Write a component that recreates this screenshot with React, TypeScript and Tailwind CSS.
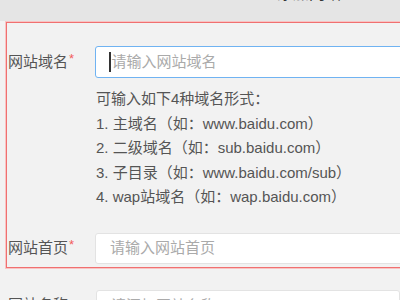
import React from "react";

const font = { fontFamily: '"Liberation Sans", "Noto Sans CJK SC", sans-serif' };

function Label({ text, req = true }: { text: string; req?: boolean }) {
  return (
    <div className="w-[88px] shrink-0 pl-[1px] text-[15px] text-[#555] flex items-center">
      <span>{text}</span>
      {req && <span className="text-[#f25c5c] text-[13px] -mt-[6px] ml-[1px]">*</span>}
    </div>
  );
}

export default function App() {
  return (
    <div className="w-[400px] h-[300px] overflow-hidden bg-[#f2f2f2] relative" style={font}>
      <div className="h-[21px] bg-[#e5e5e5] relative overflow-hidden">
        <div className="absolute left-[277px] top-[-15px] text-[16px] text-[#333] leading-[17px]">添加网站</div>
      </div>
      <div className="ml-[6px] mt-[1px] w-[420px] h-[246px] border border-[#f07070] shadow-[0_0_0_1px_#f8c4c4] pt-[23px]">
        <div className="flex items-center">
          <Label text="网站域名" />
          <div className="flex-1 h-[32px] bg-white border border-[#70b3f2] rounded-[3px] flex items-center pl-[13px] text-[15px] text-[#aaa]">
            <span className="w-[1.5px] h-[20px] bg-[#333] mr-[1px]" />
            请输入网站域名
          </div>
        </div>
        <div className="ml-[89px] mt-[9px] text-[15px] leading-[24.5px] text-[#555]">
          <div>可输入如下4种域名形式：</div>
          <div>1. 主域名（如：www.baidu.com）</div>
          <div>2. 二级域名（如：sub.baidu.com）</div>
          <div>3. 子目录（如：www.baidu.com/sub）</div>
          <div>4. wap站域名（如：wap.baidu.com）</div>
        </div>
        <div className="flex items-center mt-[23px]">
          <Label text="网站首页" />
          <div className="flex-1 h-[31px] bg-white border border-[#e3e3e3] rounded-[3px] flex items-center pl-[14px] text-[15px] text-[#aaa]">
            请输入网站首页
          </div>
        </div>
      </div>
      <div className="flex items-start mt-[22px] ml-[7px]">
        <div className="w-[89px] shrink-0 pl-[1px] pt-[4px] text-[15px] text-[#555]">网站名称</div>
        <div className="flex-1 h-[31px] bg-white border border-[#e3e3e3] rounded-[3px] pl-[14px] pt-[4px] text-[15px] text-[#aaa]">
          请添加网站名称
        </div>
      </div>
    </div>
  );
}
